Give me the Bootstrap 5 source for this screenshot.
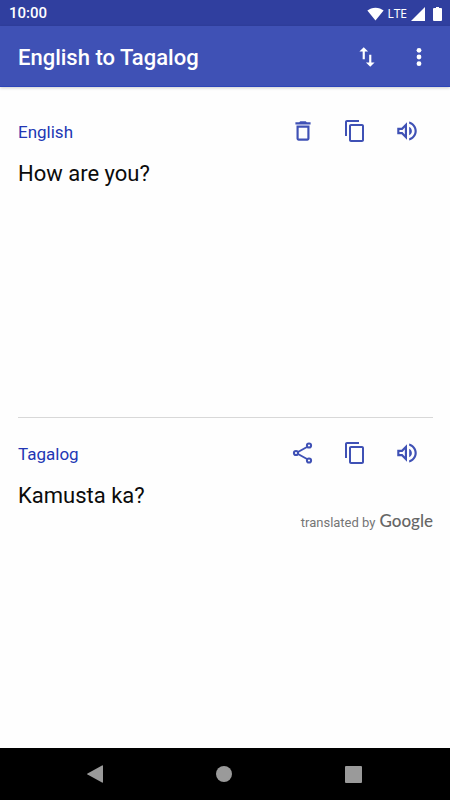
<!DOCTYPE html>
<html lang="en">
<head>
<meta charset="utf-8">
<meta name="viewport" content="width=device-width, initial-scale=1">
<title>English to Tagalog</title>
<link href="https://cdn.jsdelivr.net/npm/bootstrap@5.3.0/dist/css/bootstrap.min.css" rel="stylesheet">
<style>
  :root { --indigo: #3f51b5; --indigo-dark: #303f9f; }
  body { font-family: Roboto, "Liberation Sans", sans-serif; color: #000; background: #fefefe; }
  svg { display: block; fill: currentColor; }
  .status-bar { background: var(--indigo-dark); height: 26px; padding: 1px 8px 0 9px; font-size: 15px; }
  .network { font-family: "Noto Sans", sans-serif; font-size: 12px; line-height: 24px; }
  .app-bar { background: var(--indigo); height: 61px; padding: 2px 5px 0 18px; box-shadow: 0 1px 3px rgba(0,0,0,.2); border-bottom: 1px solid #2d45b8; }
  .app-title { font-size: 22px; line-height: 30px; font-weight: 500; padding-top: 2px; }
  .tool { width: 52px; height: 36px; color: inherit; }
  .panes { display: grid; grid-template-rows: 1fr 1fr; padding: 0 17px 2px 18px; }
  .pane { padding: 26px 0 16px; }
  .pane-result { padding-top: 17px; border-top: 1px solid #d8d8d8; }
  .tools { color: var(--indigo); }
  .language { color: #2236b4; font-size: 17px; line-height: 24px; padding-top: 2px; }
  .phrase { font-size: 22px; line-height: 30px; margin-top: 10px; color: #0b0b0b; }
  .phrase-input { resize: none; outline: 0; }
  .credit { color: #757575; font-size: 13px; line-height: 20px; }
  .brand { font: 500 17px/20px Lato, sans-serif; color: #666; }
  .share-icon { fill: none; }
  .nav-keys { background: #000; height: 52px; padding: 0 32px 0 30px; color: #9a9a9a; }
</style>
</head>
<body>
<div class="d-flex flex-column min-vh-100">
  <div class="status-bar d-flex align-items-center justify-content-between text-white">
    <span class="fw-medium">10:00</span>
    <div class="d-flex align-items-center">
      <svg class="me-1" width="17" height="14" viewBox="0 0 18 14" role="img" aria-label="Wi-Fi"><path d="M9 14 .4 3.3C2.700 1.400 5.600.300 9 .300s6.300 1.100 8.600 3z"/></svg>
      <span class="network me-1">LTE</span>
      <svg width="14" height="14" viewBox="0 0 14 14" role="img" aria-label="Signal"><path d="M14 0v14H0z"/></svg>
      <svg class="ms-2" width="9" height="14" viewBox="0 0 9 14" role="img" aria-label="Battery"><path d="M3 0h3v1h2q1 0 1 1V13q0 1-1 1H1q-1 0-1-1V2q0-1 1-1h2z"/></svg>
    </div>
  </div>

  <header class="app-bar d-flex align-items-center text-white">
    <h1 class="app-title m-0 me-auto">English to Tagalog</h1>
    <button type="button" class="tool btn border-0 p-0 d-flex align-items-center justify-content-center" aria-label="Swap languages">
      <svg width="26" height="26" viewBox="0 0 24 24"><path d="M9 3 5 6.990h3V14h2V6.990h3zM16 17.010V10h-2v7.010h-3L15 21l4-3.990z"/></svg>
    </button>
    <button type="button" class="tool btn border-0 p-0 d-flex align-items-center justify-content-center" aria-label="More options">
      <svg width="26" height="26" viewBox="0 0 24 24"><circle cx="12" cy="5.800" r="2.200"/><circle cx="12" cy="12" r="2.200"/><circle cx="12" cy="18.200" r="2.200"/></svg>
    </button>
  </header>

  <main class="panes flex-grow-1">
    <section class="pane d-flex flex-column">
      <div class="d-flex align-items-center">
        <label for="source" class="language me-auto">English</label>
        <div class="tools d-flex">
          <button type="button" class="tool btn border-0 p-0 d-flex align-items-center justify-content-center" aria-label="Clear">
            <svg width="26" height="26" viewBox="0 0 24 24"><path d="M16 9v10H8V9h8m-1.500-6h-5l-1 1H5v2h14V4h-3.500zM18 7H6v12c0 1.100.9 2 2 2h8c1.100 0 2-.9 2-2z"/></svg>
          </button>
          <button type="button" class="tool btn border-0 p-0 d-flex align-items-center justify-content-center" aria-label="Copy English text">
            <svg width="24" height="24" viewBox="0 0 24 24"><path d="M16 1H4c-1.100 0-2 .9-2 2v14h2V3h12zm3 4H8c-1.100 0-2 .9-2 2v14c0 1.100.9 2 2 2h11c1.100 0 2-.9 2-2V7c0-1.100-.9-2-2-2m0 16H8V7h11z"/></svg>
          </button>
          <button type="button" class="tool btn border-0 p-0 d-flex align-items-center justify-content-center" aria-label="Listen in English">
            <svg width="26" height="26" viewBox="0 0 24 24"><path d="M3 9v6h4l5 5V4L7 9zm7-.170v6.340L7.830 13H5v-2h2.830zM16.500 12c0-1.770-1.020-3.290-2.500-4.030v8.050c1.480-.730 2.500-2.250 2.500-4.020M14 3.230v2.060c2.890.860 5 3.540 5 6.710s-2.110 5.850-5 6.710v2.060c4.010-.910 7-4.490 7-8.770s-2.990-7.860-7-8.770"/></svg>
          </button>
        </div>
      </div>
      <textarea id="source" class="phrase phrase-input flex-grow-1 w-100 border-0 p-0 bg-transparent" rows="1" spellcheck="false">How are you?</textarea>
    </section>

    <section class="pane pane-result">
      <div class="d-flex align-items-center">
        <h2 class="language fw-normal m-0 me-auto">Tagalog</h2>
        <div class="tools d-flex">
          <button type="button" class="tool btn border-0 p-0 d-flex align-items-center justify-content-center" aria-label="Share">
            <svg class="share-icon" width="24" height="24" viewBox="0 0 24 24" stroke="currentColor" stroke-width="2"><path d="m7 11 9-5M7 13l9 5"/><circle cx="5" cy="12" r="2.100"/><circle cx="18" cy="4.500" r="2.100"/><circle cx="18" cy="19.500" r="2.100"/></svg>
          </button>
          <button type="button" class="tool btn border-0 p-0 d-flex align-items-center justify-content-center" aria-label="Copy Tagalog text">
            <svg width="24" height="24" viewBox="0 0 24 24"><path d="M16 1H4c-1.100 0-2 .9-2 2v14h2V3h12zm3 4H8c-1.100 0-2 .9-2 2v14c0 1.100.9 2 2 2h11c1.100 0 2-.9 2-2V7c0-1.100-.9-2-2-2m0 16H8V7h11z"/></svg>
          </button>
          <button type="button" class="tool btn border-0 p-0 d-flex align-items-center justify-content-center" aria-label="Listen in Tagalog">
            <svg width="26" height="26" viewBox="0 0 24 24"><path d="M3 9v6h4l5 5V4L7 9zm7-.170v6.340L7.830 13H5v-2h2.830zM16.500 12c0-1.770-1.020-3.290-2.500-4.030v8.050c1.480-.730 2.500-2.250 2.500-4.020M14 3.230v2.060c2.890.860 5 3.540 5 6.710s-2.110 5.850-5 6.710v2.060c4.010-.910 7-4.490 7-8.770s-2.990-7.860-7-8.770"/></svg>
          </button>
        </div>
      </div>
      <p class="phrase mb-0">Kamusta ka?</p>
      <p class="credit d-flex justify-content-end align-items-baseline gap-1 mb-0">translated by <span class="brand">Google</span></p>
    </section>
  </main>

  <nav class="nav-keys d-flex align-items-center" aria-label="System">
    <button type="button" class="btn border-0 p-0 flex-fill text-reset" aria-label="Back"><svg class="mx-auto" width="18" height="18" viewBox="0 0 18 18"><path d="M16 .500q1-.500 1 .500v16q0 1-1 .500L1.500 9.600q-1-.600 0-1.200z"/></svg></button>
    <button type="button" class="btn border-0 p-0 flex-fill text-reset" aria-label="Home"><svg class="mx-auto" width="16" height="16" viewBox="0 0 16 16"><circle cx="8" cy="8" r="8"/></svg></button>
    <button type="button" class="btn border-0 p-0 flex-fill text-reset" aria-label="Recent apps"><svg class="mx-auto" width="17" height="17" viewBox="0 0 17 17"><rect width="17" height="17" rx="1"/></svg></button>
  </nav>
</div>
<script src="https://cdn.jsdelivr.net/npm/bootstrap@5.3.0/dist/js/bootstrap.bundle.min.js"></script>
</body>
</html>
